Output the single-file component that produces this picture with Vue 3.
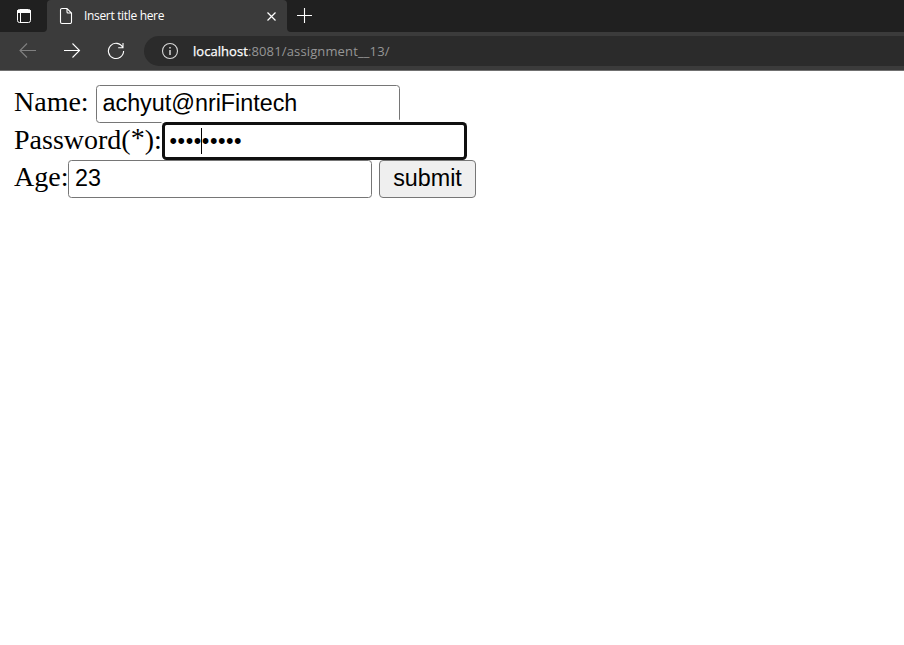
<script setup>
import { ref } from 'vue'

const name = ref('achyut@nriFintech')
const age = ref('23')
</script>

<template>
  <div class="browser">
    <header class="tabs">
      <div class="side">
        <svg width="16" height="16" viewBox="0 0 16 16">
          <rect x="1.5" y="1.5" width="13" height="13" rx="2" fill="none" stroke="#fff" />
          <path d="M1.5 2.5h13v2h-13z" fill="#fff" stroke="#fff" />
          <path d="M4.5 5v9.500" stroke="#fff" />
        </svg>
      </div>
      <div class="tab-slot">
        <div class="tab">
          <svg width="14" height="18" viewBox="0 0 14 18" fill="none" stroke="#fff" stroke-width="1.1">
            <path d="M3 1.500h5l4.500 4.500v9a1.500 1.500 0 0 1-1.500 1.500H3A1.500 1.500 0 0 1 1.500 15V3A1.500 1.500 0 0 1 3 1.500zM8 1.500V5A1 1 0 0 0 9 6h3.500" />
          </svg>
          <span class="title">Insert title here</span>
          <svg class="close" width="10" height="10" viewBox="0 0 10 10" stroke="#fff" stroke-width="1.2">
            <path d="M1.500 1.500l8 8M9.500 1.500l-8 8" />
          </svg>
        </div>
      </div>
      <div class="rest">
        <svg width="15" height="15" viewBox="0 0 15 15" stroke="#fff" stroke-width="1.1">
          <path d="M7.500 0v15M0 7.500h15" />
        </svg>
      </div>
    </header>
    <nav class="toolbar">
      <svg width="18" height="16" viewBox="0 0 18 16" fill="none" stroke="#808080" stroke-width="1.1">
        <path d="M17 7.500H1M8 .5l-7 7 7 7" />
      </svg>
      <svg width="18" height="16" viewBox="0 0 18 16" fill="none" stroke="#fff" stroke-width="1.1">
        <path d="M1 7.500h15.500M9.500 .5l7 7-7 7" />
      </svg>
      <svg width="18" height="18" viewBox="0 0 18 18" fill="none" stroke="#fff" stroke-width="1.1">
        <path d="M15.800 5.500A7.600 7.600 0 1 0 16.600 9M16 1v4.800h-4.800" />
      </svg>
      <div class="address">
        <svg width="18" height="18" viewBox="0 0 18 18" fill="none" stroke="#d8d8d8" stroke-width="1.1">
          <circle cx="9" cy="9" r="7.500" />
          <path d="M9 8v5M9 5v1.600" stroke-width="1.500" />
        </svg>
        <span class="url"><b>localhost</b>:8081/assignment__13/</span>
      </div>
    </nav>
    <form class="page" @submit.prevent>
      <div class="row">
        <label class="name-label">Name:</label>
        <input v-model="name" class="field" type="text">
      </div>
      <div class="row">
        <label class="password-label">Password(<span class="star">*</span>):</label>
        <div class="field focused"><span class="dots">•••••••••</span><i class="caret"></i></div>
      </div>
      <div class="row last">
        <label class="age-label">Age:</label>
        <input v-model="age" class="field" type="text">
        <button type="submit">submit</button>
      </div>
    </form>
  </div>
</template>

<style>
body {
  margin: 0;
  background: #fff;
}
</style>

<style scoped>
.browser {
  height: 645px;
  overflow: hidden;
  background: #fff;
}
svg {
  display: block;
  flex: none;
}
.tabs {
  display: flex;
  height: 32px;
  background: #3b3b3b;
}
.side {
  box-sizing: border-box;
  width: 47px;
  padding: 8px 0 0 16px;
  background: #202020;
  border-bottom-right-radius: 4px;
}
.tab-slot {
  width: 240px;
  background: linear-gradient(#202020 50%, #3b3b3b 50%);
}
.tab {
  display: flex;
  box-sizing: border-box;
  height: 32px;
  align-items: center;
  padding: 0 11px 0 12px;
  background: #3b3b3b;
  border-radius: 4px 4px 0 0;
}
.title {
  margin-left: 11px;
  color: #fff;
  font: 12px/16px "Open Sans", sans-serif;
  letter-spacing: -0.33px;
  white-space: nowrap;
}
.close {
  margin-left: auto;
}
.rest {
  box-sizing: border-box;
  flex: 1;
  padding: 8px 0 0 10px;
  background: #202020;
  border-bottom-left-radius: 4px;
}
.toolbar {
  display: flex;
  box-sizing: border-box;
  height: 39px;
  align-items: center;
  gap: 26px;
  padding-left: 19px;
  background: #3b3b3b;
  border-bottom: 1px solid #707070;
}
.address {
  display: flex;
  flex: 1;
  height: 30px;
  align-items: center;
  gap: 14px;
  margin-left: -7px;
  padding-left: 17px;
  background: #2b2b2b;
  border-radius: 15px 0 0 15px;
}
.url {
  color: #969696;
  font: 13px/18px "Open Sans", sans-serif;
  letter-spacing: 0.14px;
  white-space: nowrap;
}
.url b {
  color: #fff;
  font-weight: 500;
  letter-spacing: 0.05px;
  -webkit-text-stroke: 0.25px #fff;
}
.page {
  padding: 14px 14px 0;
  color: #000;
  font: 28px/32px "Liberation Serif", serif;
}
.row {
  display: flex;
  height: 37.5px;
}
.last {
  position: relative;
}
label {
  flex: none;
  padding-top: 1px;
  white-space: nowrap;
}
.star {
  line-height: 0;
  vertical-align: 2px;
}
.name-label {
  width: 82px;
}
.password-label {
  width: 149px;
}
.age-label {
  width: 54px;
}
.field {
  box-sizing: border-box;
  width: 304px;
  height: 38px;
  flex: none;
  margin: 0;
  padding: 1px 6px 3px 5.5px;
  color: #000;
  background: #fff;
  border: 1px solid #767676;
  border-radius: 3.5px;
  outline: none;
  font: 23.333px/28px "Liberation Sans", sans-serif;
}
.last .field {
  padding-left: 6px;
}
.focused {
  position: relative;
  width: 303px;
  height: 36px;
  padding: 0 4px;
  border: 2px solid #101010;
  box-shadow: 0 0 0 1px #101010, 0 0 0 3px #fff;
}
.dots {
  display: block;
  height: 32px;
  padding-left: 0.5px;
  font-size: 21.5px;
  line-height: 33px;
  letter-spacing: 0.55px;
}
.caret {
  position: absolute;
  top: 3px;
  left: 36px;
  width: 1px;
  height: 26px;
  background: #000;
}
button {
  box-sizing: border-box;
  width: 97px;
  height: 38px;
  margin: 0 0 0 7px;
  padding: 0 0 2px;
  color: #000;
  background: #efefef;
  border: 1px solid #767676;
  border-radius: 4px;
  font: 23.333px/28px "Liberation Sans", sans-serif;
}
</style>
